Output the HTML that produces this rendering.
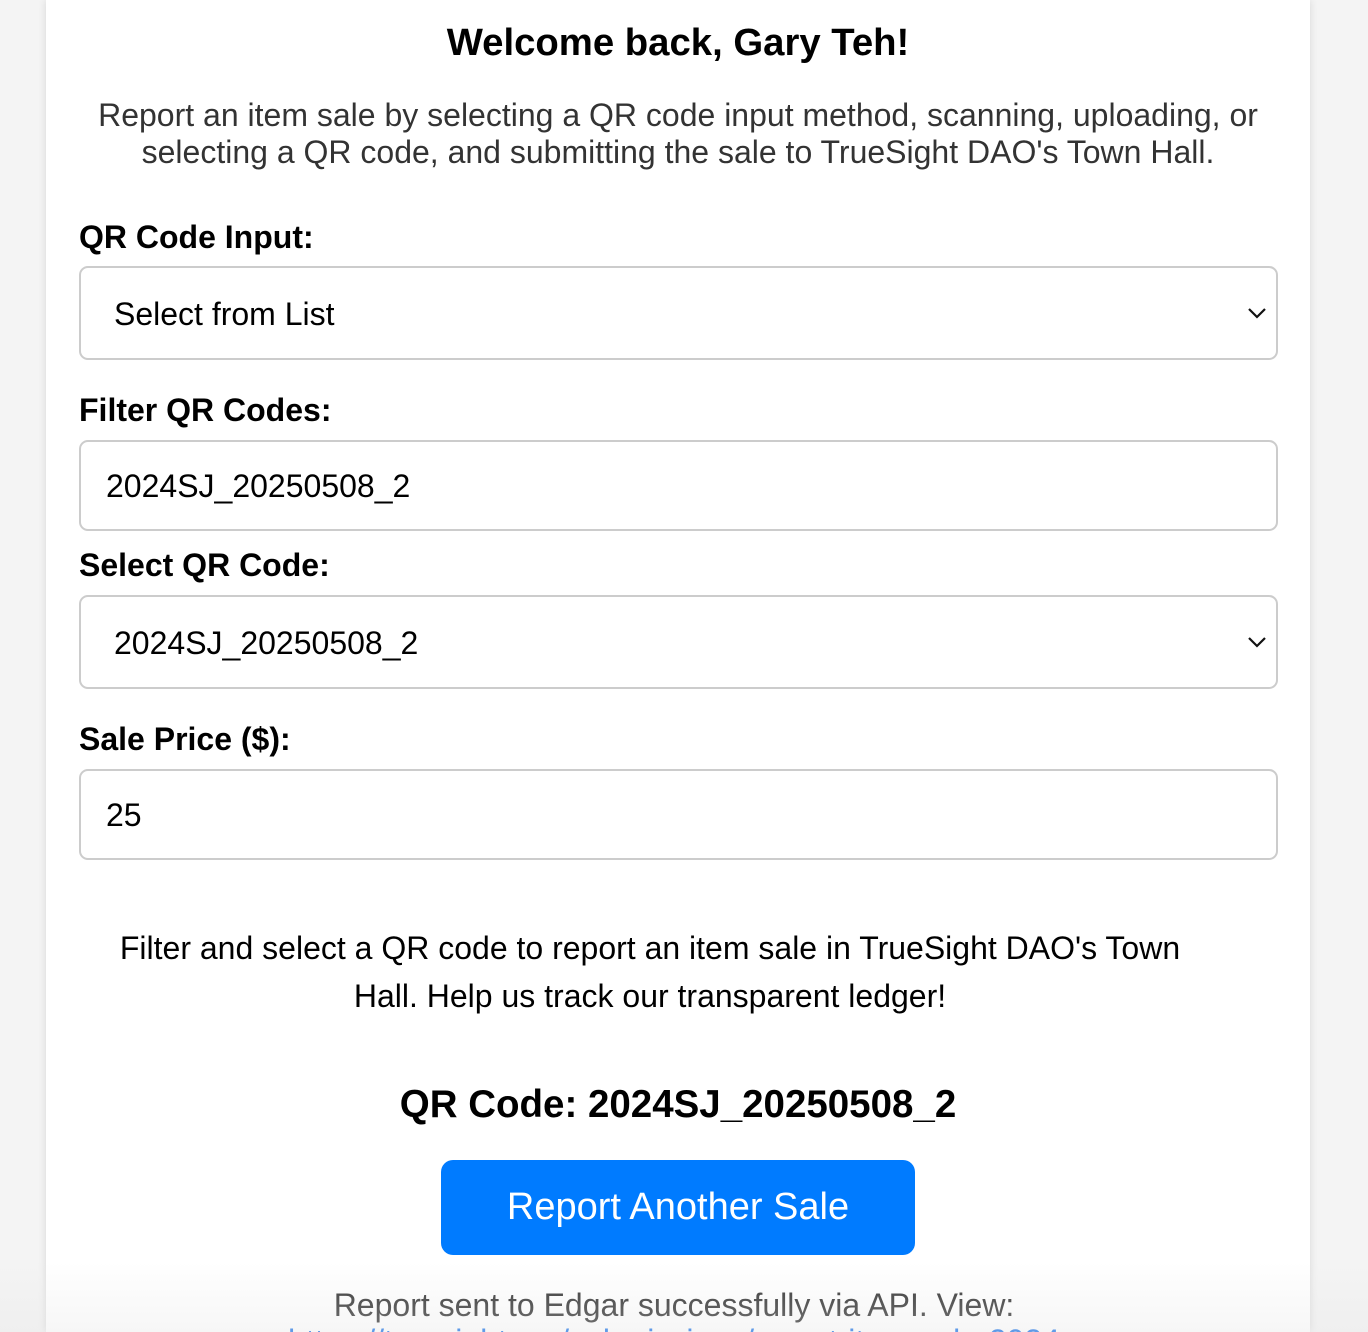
<!DOCTYPE html>
<html><head><meta charset="utf-8"><style>
html,body{margin:0;padding:0;width:1368px;height:1332px;overflow:hidden;background:#f4f4f4;font-family:"Liberation Sans",Arial,sans-serif;}
.wrap{position:absolute;left:0;top:0;width:1368px;height:1332px;overflow:hidden;}
.card{position:absolute;left:46px;top:0;width:1264px;height:1332px;background:#fff;box-shadow:0 0 8px rgba(0,0,0,0.12);}
.t{position:absolute;white-space:nowrap;line-height:1;}
.c{left:0;width:1368px;text-align:center;}
.lbl{left:79px;font-weight:bold;font-size:32px;color:#000;}
.box{position:absolute;left:79px;width:1199px;border:2px solid #ccc;border-radius:9px;background:#fff;box-sizing:border-box;}
.val{position:absolute;font-size:32px;color:#000;line-height:1;}
.chev{position:absolute;right:8px;}
.btn{position:absolute;left:441px;top:1160px;width:474px;height:95px;background:#007bff;border-radius:12px;color:#fff;font-size:38px;text-align:center;line-height:95px;}
.fade{position:absolute;left:0;top:1262px;width:1368px;height:70px;background:linear-gradient(rgba(240,240,240,0),rgba(230,230,230,0.35));pointer-events:none;}
</style></head><body><div class="wrap">
<div class="card"></div>
<div class="t c" style="top:24px;font-size:38.3px;font-weight:bold;left:-6px;">Welcome back, Gary Teh!</div>
<div class="t c" style="top:97px;font-size:32px;color:#333;line-height:37px;left:-6px;">Report an item sale by selecting a QR code input method, scanning, uploading, or<br>selecting a QR code, and submitting the sale to TrueSight DAO's Town Hall.</div>

<div class="t lbl" style="top:221px;">QR Code Input:</div>
<div class="box" style="top:266px;height:94px;">
 <div class="val" style="left:33px;top:30px;">Select from List</div>
 <svg class="chev" style="top:37px" width="22" height="16" viewBox="0 0 22 16"><path d="M3 4 L11 12 L19 4" fill="none" stroke="#111" stroke-width="2.2"/></svg>
</div>

<div class="t lbl" style="top:394px;">Filter QR Codes:</div>
<div class="box" style="top:440px;height:91px;">
 <div class="val" style="left:25px;top:28px;">2024SJ_20250508_2</div>
</div>

<div class="t lbl" style="top:549px;">Select QR Code:</div>
<div class="box" style="top:595px;height:94px;">
 <div class="val" style="left:33px;top:30px;">2024SJ_20250508_2</div>
 <svg class="chev" style="top:37px" width="22" height="16" viewBox="0 0 22 16"><path d="M3 4 L11 12 L19 4" fill="none" stroke="#111" stroke-width="2.2"/></svg>
</div>

<div class="t lbl" style="top:723px;">Sale Price ($):</div>
<div class="box" style="top:769px;height:91px;">
 <div class="val" style="left:25px;top:28px;">25</div>
</div>

<div class="t" style="left:0;width:1300px;text-align:center;top:924px;font-size:32px;line-height:48px;color:#000;">Filter and select a QR code to report an item sale in TrueSight DAO's Town<br>Hall. Help us track our transparent ledger!</div>

<div class="t c" style="top:1086px;font-size:38.5px;font-weight:bold;left:-6px;">QR Code: 2024SJ_20250508_2</div>
<div class="btn">Report Another Sale</div>
<div class="t c" style="top:1289px;font-size:32px;color:#333;left:-10px;">Report sent to Edgar successfully via API. View:</div>
<div class="t" style="left:288px;top:1325px;font-size:32px;color:#1a73e8;">https://truesight.me/submissions/report-item-sale-2024</div>
<div class="fade"></div>
</div></body></html>
